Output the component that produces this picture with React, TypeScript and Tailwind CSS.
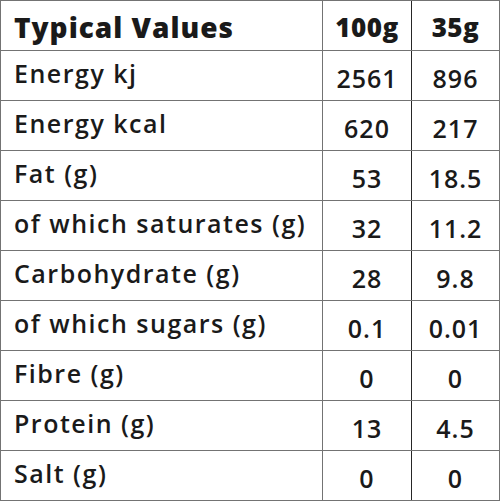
import React from "react";

const rows: [string, string, string][] = [
  ["Energy kj", "2561", "896"],
  ["Energy kcal", "620", "217"],
  ["Fat (g)", "53", "18.5"],
  ["of which saturates (g)", "32", "11.2"],
  ["Carbohydrate (g)", "28", "9.8"],
  ["of which sugars (g)", "0.1", "0.01"],
  ["Fibre (g)", "0", "0"],
  ["Protein (g)", "13", "4.5"],
  ["Salt (g)", "0", "0"],
];

const App: React.FC = () => {
  return (
    <div className="bg-white w-[502px] h-[502px] font-['Open_Sans',sans-serif] text-[#1a1a1a]">
      <div className="w-[500px] border border-[#737373] flex flex-col">
        <div className="flex h-[49px] font-extrabold leading-none">
          <div className="w-[322px] border-r border-[#737373] pl-[13px] flex items-center pt-[2px] text-[28px] tracking-[1px]">
            Typical Values
          </div>
          <div className="w-[89px] border-r border-[#262626] flex items-center justify-center pt-[2px] text-[26px] tracking-[0.5px]">
            100g
          </div>
          <div className="flex-1 flex items-center justify-center pt-[2px] text-[26px] tracking-[0.5px]">35g</div>
        </div>
        {rows.map(([label, a, b]) => (
          <div key={label} className="flex h-[50px] border-t border-[#737373] font-semibold text-[25px] leading-none">
            <div className="w-[322px] border-r border-[#737373] pl-[13px] flex items-center pb-[4px] tracking-[1.5px]">
              {label}
            </div>
            <div className="w-[89px] border-r border-[#262626] flex items-center justify-center pt-[6px] tracking-[1px]">
              {a}
            </div>
            <div className="flex-1 flex items-center justify-center pt-[6px] tracking-[1px]">{b}</div>
          </div>
        ))}
      </div>
    </div>
  );
};

export default App;
